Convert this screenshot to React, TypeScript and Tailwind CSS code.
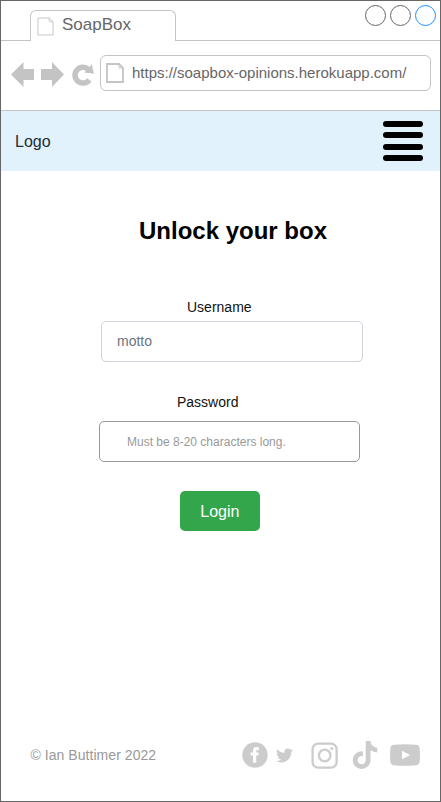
import React from "react";
import { FaTiktok, FaTwitter } from "react-icons/fa";

function PageIcon({ className, weight }: { className: string; weight: number }) {
  return (
    <svg className={className} viewBox="0 0 18 20" fill="none" stroke="#c4c4c4" strokeWidth={weight}>
      <path d="M1 1H13L17 5V19H1Z" />
      <path d="M13 1V5H17" strokeWidth={0.8} />
    </svg>
  );
}

function TabStrip() {
  return (
    <div className="flex h-10 shrink-0 items-end border-b border-[#c4c4c4] pl-[29px]">
      <div className="-mb-px flex h-[31px] w-[146px] items-start rounded-t-[6px] border border-b-0 border-[#c4c4c4] bg-white">
        <PageIcon className="mt-[6px] ml-[5.5px] h-[19px] w-[17px]" weight={1} />
        <span className="ml-[8.5px] pt-[3px] text-[17px] leading-[21px] text-[#666]">SoapBox</span>
      </div>
      <div className="mr-[4px] mb-[14px] ml-auto flex gap-[4px]">
        <span className="size-[21px] rounded-full border border-[#666]" />
        <span className="size-[21px] rounded-full border border-[#666]" />
        <span className="size-[21px] rounded-full border border-[#1e90ff]" />
      </div>
    </div>
  );
}

function AddressBar() {
  return (
    <div className="flex h-[70px] shrink-0 items-start border-b border-[#c4c4c4] pl-[10px]">
      <svg className="mt-[21px] h-[25px] w-[84px] shrink-0" viewBox="0 0 84 25" fill="#c4c4c4">
        <path d="M0 12.5L12.5 0V7H23V18H12.5V25Z" />
        <path d="M53 12.5L41 0V7H30V18H41V25Z" />
        <path d="M78.3 17.8A7.9 7.9 0 1 1 77.4 7.5" fill="none" stroke="#c4c4c4" strokeWidth="5.5" />
        <path d="M80.8 2.2L82.9 11.8L73.4 10.4Z" />
      </svg>
      <div className="mt-[14px] ml-[5px] flex h-[36px] w-[331px] items-center rounded-[6px] border border-[#c4c4c4] pl-[5px]">
        <PageIcon className="h-[20px] w-[18px]" weight={1.8} />
        <span className="ml-[8px] text-[15px] leading-[18px] text-[#666]">https://soapbox-opinions.herokuapp.com/</span>
      </div>
    </div>
  );
}

function Header() {
  return (
    <header className="flex h-[60px] shrink-0 items-center justify-between bg-[#e1f2fd] pr-[17px] pl-[14px]">
      <span className="pt-px text-base text-[#222b31]">Logo</span>
      <div className="flex w-10 flex-col gap-[5.5px]">
        <span className="h-[6px] rounded-full bg-black" />
        <span className="h-[6px] rounded-full bg-black" />
        <span className="h-[6px] rounded-full bg-black" />
        <span className="h-[6px] rounded-full bg-black" />
      </div>
    </header>
  );
}

function LoginForm() {
  return (
    <main className="flex flex-1 flex-col items-start">
      <h1 className="mt-[44px] ml-[138px] text-[24px] leading-[32px] font-bold whitespace-nowrap text-black">
        Unlock your box
      </h1>
      <label className="mt-[51px] ml-[186px] text-[14px] leading-[18px] text-[#111]">Username</label>
      <div className="mt-[5px] ml-[100px] flex h-[41px] w-[262px] items-center rounded-[5px] border border-[#ced4da] pl-[15px] text-[14px] text-[#6c757d]">
        motto
      </div>
      <label className="mt-[31px] ml-[176px] text-[14px] leading-[18px] text-[#111]">Password</label>
      <div className="mt-[10px] ml-[98px] flex h-[41px] w-[261px] items-center rounded-[5px] border border-[#999] pl-[27px] text-[12px] text-[#999]">
        Must be 8-20 characters long.
      </div>
      <button className="mt-[29.4px] ml-[179.4px] h-[40px] w-[80px] rounded-[5px] bg-[#33a64c] pt-[2px] pr-px text-base text-white">
        Login
      </button>
    </main>
  );
}

function Footer() {
  return (
    <footer className="flex h-[92px] shrink-0 items-center pl-[29.5px] text-[#ccc]">
      <span className="w-[211.5px] text-[14px] tracking-[0.05px] text-[#999]">© Ian Buttimer 2022</span>
      <svg className="size-[26px]" viewBox="0 0 26 26">
        <circle cx="13" cy="13" r="12.7" fill="currentColor" />
        <path d="M11 20.7V13.5H8.7V10.4H11V8.7C11 6.3 12.3 5.1 14.5 5.1H16.8V8.2H15.2C14.5 8.2 14.2 8.5 14.2 9.2V10.4H16.8L16.4 13.5H14.2V20.7Z" fill="#fff" />
      </svg>
      <FaTwitter className="ml-[8px] size-[17px]" />
      <svg className="ml-[18px] size-[27px]" viewBox="0 0 27 27" fill="none" stroke="currentColor" strokeWidth="2.3">
        <rect x="1.6" y="1.6" width="24" height="24" rx="5.5" />
        <circle cx="13.7" cy="13.5" r="5.8" />
        <circle cx="20.8" cy="6.6" r="1.5" fill="currentColor" stroke="none" />
      </svg>
      <FaTiktok className="ml-[14px] h-[28px] w-[26px]" />
      <svg className="ml-[12px] h-[22px] w-[30px]" viewBox="0 0 30 22">
        <path d="M4 .8Q15-.3 26 .8Q29.2 1 29.6 4.2Q30.3 11 29.6 17.8Q29.2 21 26 21.2Q15 22.3 4 21.2Q.8 21 .4 17.8Q-.3 11 .4 4.2Q.8 1 4 .8Z" fill="currentColor" />
        <path d="M12 6.8L20 11L12 15.2Z" fill="#fff" />
      </svg>
    </footer>
  );
}

export default function App() {
  return (
    <div className="flex h-[802px] w-[441px] flex-col overflow-hidden border border-[#666] bg-white font-['Liberation_Sans',Arial,sans-serif]">
      <TabStrip />
      <AddressBar />
      <Header />
      <LoginForm />
      <Footer />
    </div>
  );
}
